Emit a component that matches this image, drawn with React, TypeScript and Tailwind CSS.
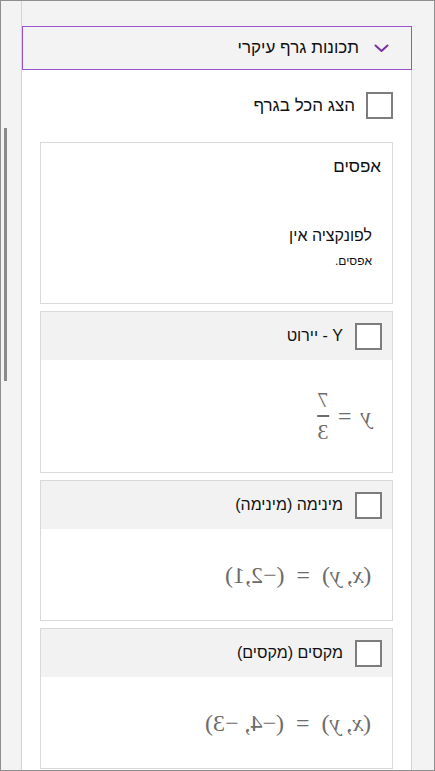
import React from "react";

const hebrew = { fontFamily: '"Liberation Sans", "Noto Sans", Arial, sans-serif' };
const mathFont = { fontFamily: '"Liberation Serif", "DejaVu Serif", serif' };

function Checkbox() {
  return <div className="w-[27px] h-[27px] shrink-0 border-2 border-[#7d7d7d] bg-white" />;
}

function Chevron() {
  return (
    <svg width="15" height="9" viewBox="0 0 15 9" fill="none">
      <path d="M1.5 1.5 L7.5 7 L13.5 1.5" stroke="#7a2fa8" strokeWidth="2" strokeLinecap="round" strokeLinejoin="round" />
    </svg>
  );
}

// the math in the reference is mirrored horizontally
function Mirrored({ children }: { children: React.ReactNode }) {
  return (
    <div dir="ltr" className="-scale-x-100 flex items-center text-[#6c6c6c] text-[24px] leading-none" style={mathFont}>
      {children}
    </div>
  );
}

function PointCard({ label, children, bodyH }: { label: string; children: React.ReactNode; bodyH: string }) {
  return (
    <div className="border border-[#d9d9d9] bg-white">
      <div className="h-[48px] bg-[#f2f2f2] flex items-center gap-[12px] pr-[10px]">
        <Checkbox />
        <span className="text-[16px] text-[#111]">{label}</span>
      </div>
      <div className={`${bodyH} flex items-center justify-start pr-[21px]`} dir="rtl">
        {children}
      </div>
    </div>
  );
}

export default function App() {
  return (
    <div className="w-[435px] h-[771px] bg-[#f3f3f3] border border-[#8f8f8f] flex overflow-hidden" style={hebrew}>
      {/* left scroll strip */}
      <div className="w-[21px] shrink-0 border-r border-[#d4d4d4]">
        <div className="ml-[3px] mt-[127px] w-[3px] h-[253px] bg-[#8a8a8a]" />
      </div>

      {/* main column */}
      <div className="w-[390px] shrink-0 flex flex-col pt-[25px]">
        <div className="h-[44px] border border-[#9b55c9] bg-[#f3f3f3] flex items-center gap-[15px] pr-[22px]" dir="rtl">
          <Chevron />
          <span className="text-[17px] text-[#111]">תכונות גרף עיקרי</span>
        </div>

        <div className="flex-1 bg-white border-r border-[#d4d4d4] px-[18px] pt-[22px] flex flex-col" dir="rtl">
          <div className="flex items-center gap-[11px]">
            <Checkbox />
            <span className="text-[17px] text-[#111]">הצג הכל בגרף</span>
          </div>

          <div className="mt-[23px] flex flex-col gap-[7px]">
            <div className="h-[162px] border border-[#d9d9d9] bg-white pr-[11px] pt-[12px]">
              <div className="text-[17px] leading-[24px] text-[#111]">אפסים</div>
              <div className="mt-[46px] pr-[9px] text-[16px] leading-[22px] text-[#111]">לפונקציה אין</div>
              <div className="mt-[6px] pr-[9px] text-[12px] leading-[16px] text-[#111]">אפסים.</div>
            </div>

            <PointCard label="Y - יירוט" bodyH="h-[112px]">
              <Mirrored>
                <span className="italic">y</span>
                <span className="mx-[9px]">=</span>
                <span className="flex flex-col items-center text-[22px]">
                  <span className="leading-[24px]">7</span>
                  <span className="my-[3px] w-[12px] h-[1.5px] bg-[#6c6c6c]" />
                  <span className="leading-[24px]">3</span>
                </span>
              </Mirrored>
            </PointCard>

            <PointCard label="מינימה (מינימה)" bodyH="h-[91px]">
              <Mirrored>
                <span className="whitespace-pre">
                  (<i>x</i>, <i>y</i>)  =  (−2,1)
                </span>
              </Mirrored>
            </PointCard>

            <PointCard label="מקסים (מקסים)" bodyH="h-[91px]">
              <Mirrored>
                <span className="whitespace-pre">
                  (<i>x</i>, <i>y</i>)  =  (−4, −3)
                </span>
              </Mirrored>
            </PointCard>
          </div>
        </div>
      </div>
    </div>
  );
}
